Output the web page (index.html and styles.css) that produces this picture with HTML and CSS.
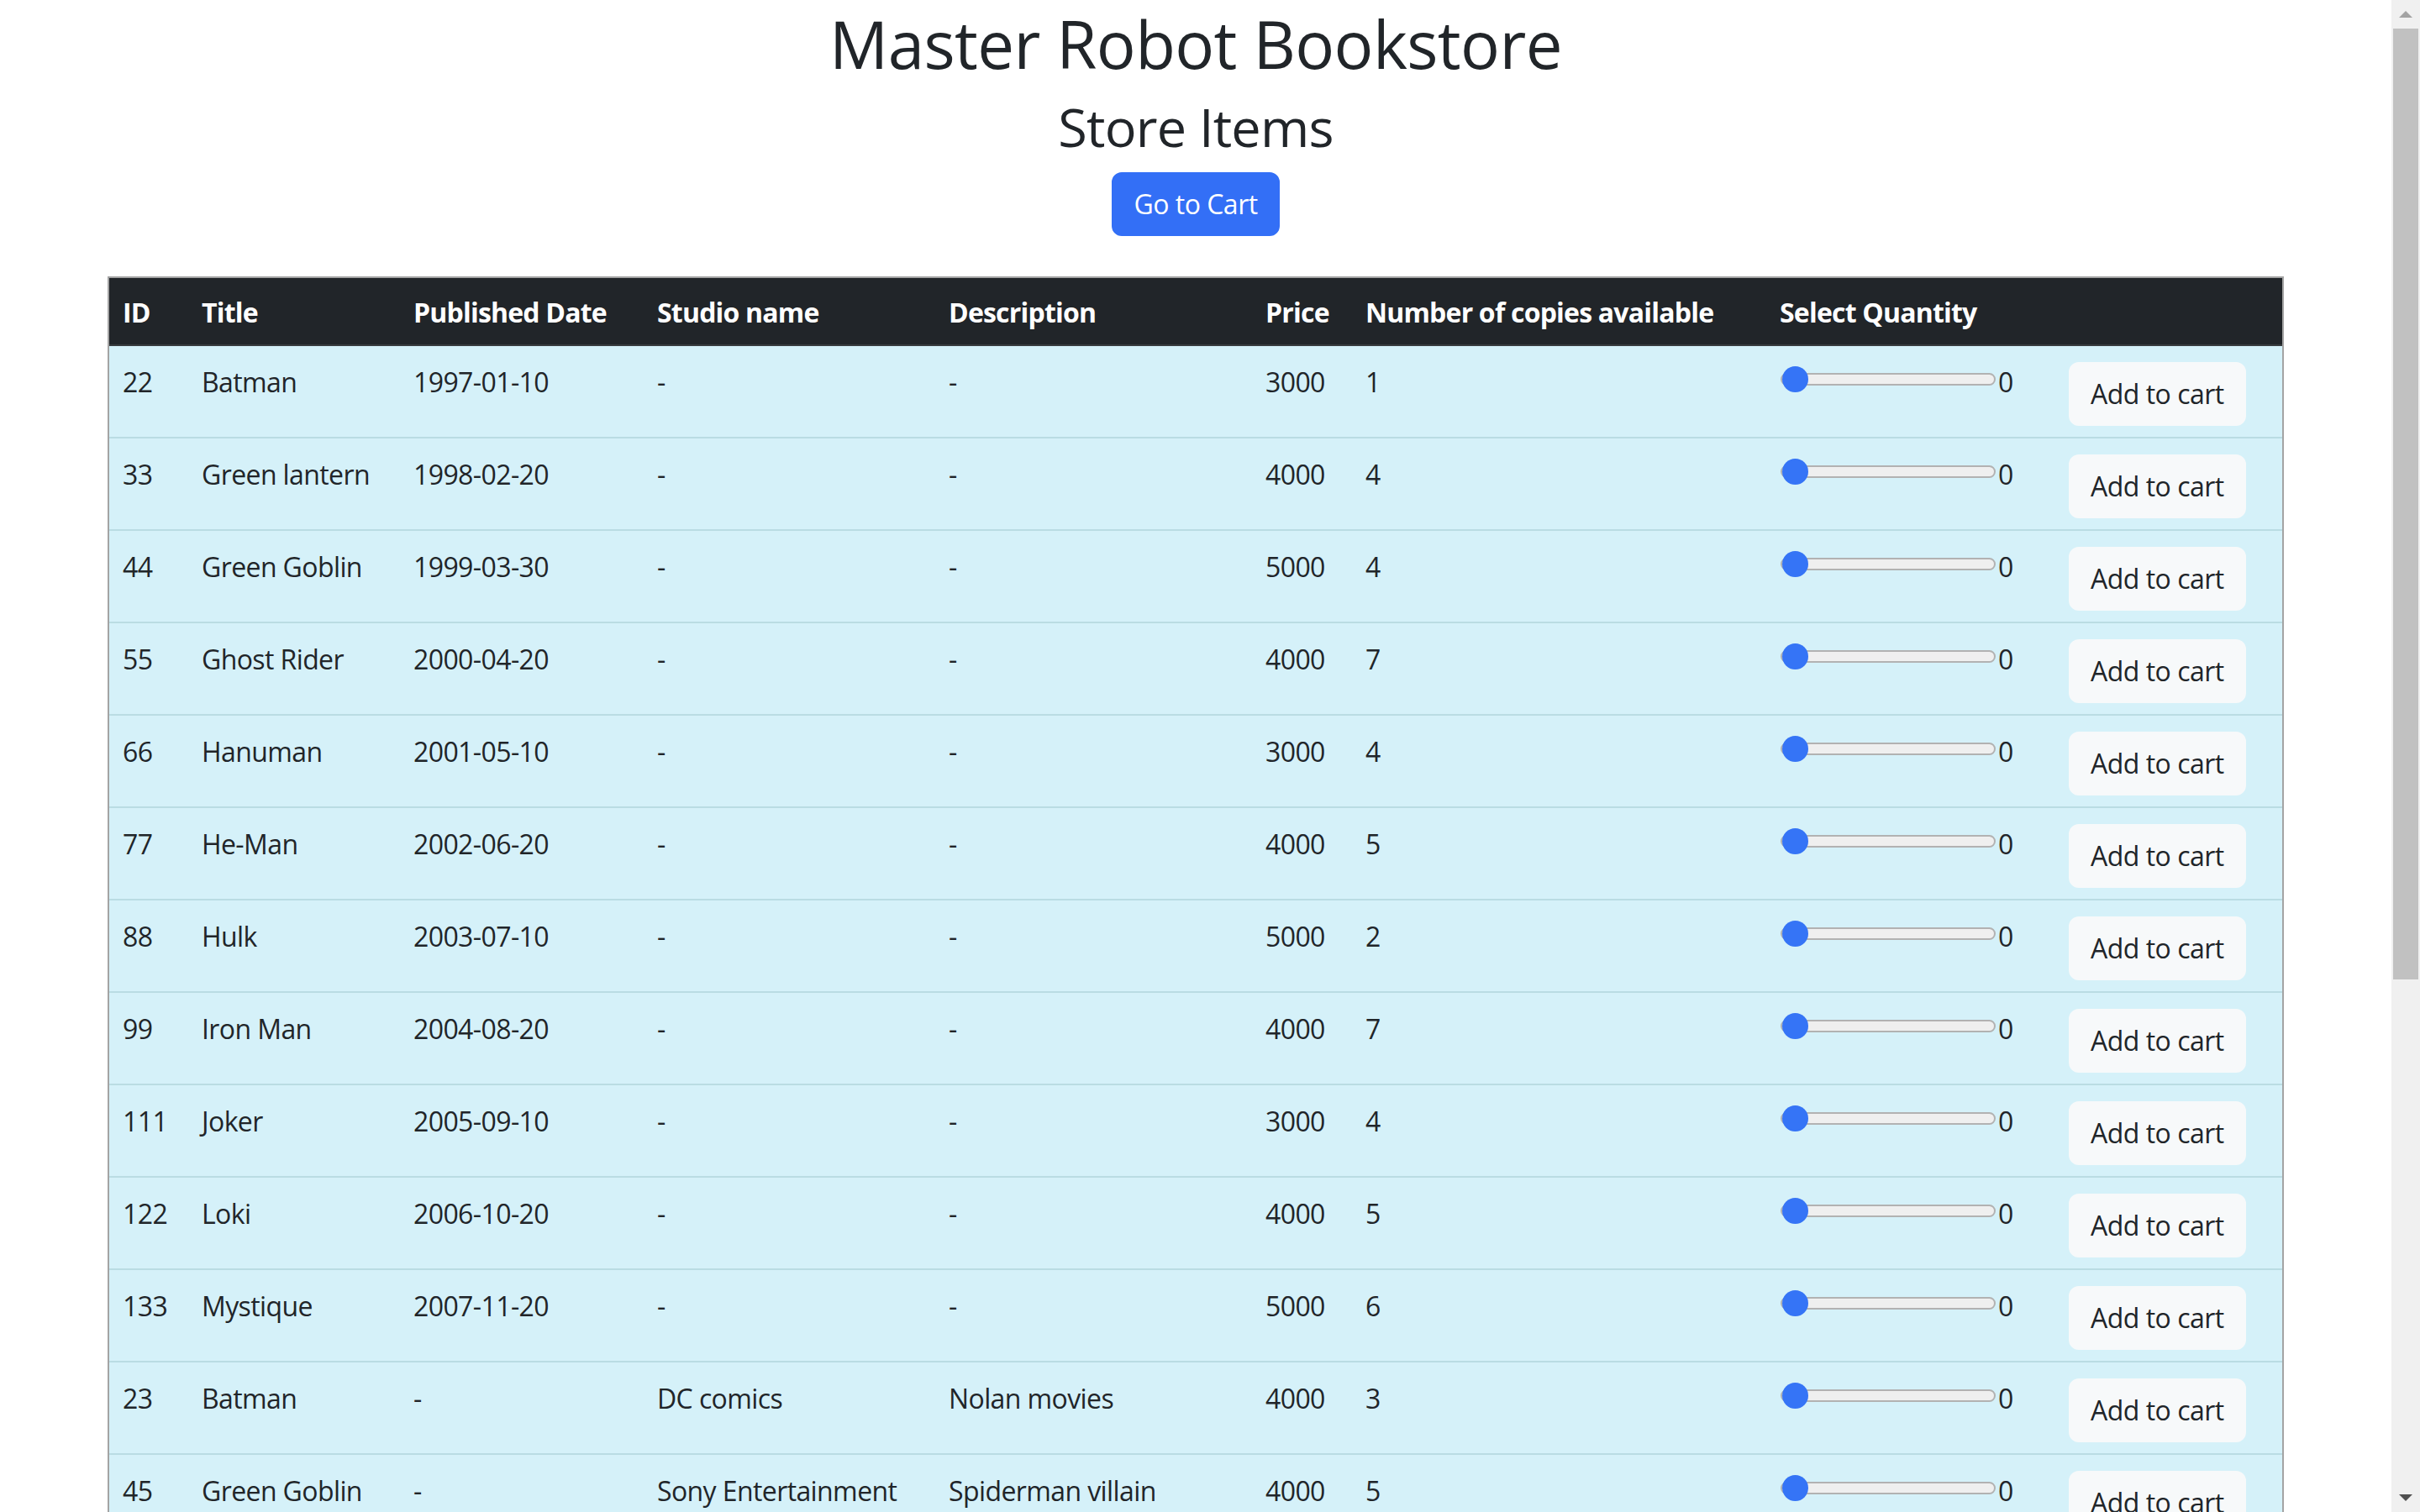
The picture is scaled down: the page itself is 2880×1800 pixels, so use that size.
FILE: index.html
```html
<!DOCTYPE html>
<html lang="en">
<head>
<meta charset="utf-8">
<title>Master Robot Bookstore</title>
<link rel="stylesheet" href="styles.css">
</head>
<body>
<div class="app">
  <header class="hero">
    <h1 class="title">Master Robot Bookstore</h1>
    <h2 class="subtitle">Store Items</h2>
    <div class="actions"><button class="btn btn-primary" type="button">Go to Cart</button></div>
  </header>
  <div class="table-wrap">
    <table class="items">
      <colgroup>
        <col class="c-id"><col class="c-title"><col class="c-date"><col class="c-studio"><col class="c-desc"><col class="c-price"><col class="c-copies"><col class="c-qty"><col class="c-act">
      </colgroup>
      <thead>
        <tr><th>ID</th><th>Title</th><th>Published Date</th><th>Studio name</th><th>Description</th><th>Price</th><th>Number of copies available</th><th>Select Quantity</th><th></th></tr>
      </thead>
      <tbody>
        <tr><td>22</td><td>Batman</td><td>1997-01-10</td><td>-</td><td>-</td><td>3000</td><td>1</td><td><div class="qty"><input type="range" min="0" max="1" value="0"><span class="qty-value">0</span></div></td><td><button class="btn btn-light" type="button">Add to cart</button></td></tr>
        <tr><td>33</td><td>Green lantern</td><td>1998-02-20</td><td>-</td><td>-</td><td>4000</td><td>4</td><td><div class="qty"><input type="range" min="0" max="4" value="0"><span class="qty-value">0</span></div></td><td><button class="btn btn-light" type="button">Add to cart</button></td></tr>
        <tr><td>44</td><td>Green Goblin</td><td>1999-03-30</td><td>-</td><td>-</td><td>5000</td><td>4</td><td><div class="qty"><input type="range" min="0" max="4" value="0"><span class="qty-value">0</span></div></td><td><button class="btn btn-light" type="button">Add to cart</button></td></tr>
        <tr><td>55</td><td>Ghost Rider</td><td>2000-04-20</td><td>-</td><td>-</td><td>4000</td><td>7</td><td><div class="qty"><input type="range" min="0" max="7" value="0"><span class="qty-value">0</span></div></td><td><button class="btn btn-light" type="button">Add to cart</button></td></tr>
        <tr><td>66</td><td>Hanuman</td><td>2001-05-10</td><td>-</td><td>-</td><td>3000</td><td>4</td><td><div class="qty"><input type="range" min="0" max="4" value="0"><span class="qty-value">0</span></div></td><td><button class="btn btn-light" type="button">Add to cart</button></td></tr>
        <tr><td>77</td><td>He-Man</td><td>2002-06-20</td><td>-</td><td>-</td><td>4000</td><td>5</td><td><div class="qty"><input type="range" min="0" max="5" value="0"><span class="qty-value">0</span></div></td><td><button class="btn btn-light" type="button">Add to cart</button></td></tr>
        <tr><td>88</td><td>Hulk</td><td>2003-07-10</td><td>-</td><td>-</td><td>5000</td><td>2</td><td><div class="qty"><input type="range" min="0" max="2" value="0"><span class="qty-value">0</span></div></td><td><button class="btn btn-light" type="button">Add to cart</button></td></tr>
        <tr><td>99</td><td>Iron Man</td><td>2004-08-20</td><td>-</td><td>-</td><td>4000</td><td>7</td><td><div class="qty"><input type="range" min="0" max="7" value="0"><span class="qty-value">0</span></div></td><td><button class="btn btn-light" type="button">Add to cart</button></td></tr>
        <tr><td>111</td><td>Joker</td><td>2005-09-10</td><td>-</td><td>-</td><td>3000</td><td>4</td><td><div class="qty"><input type="range" min="0" max="4" value="0"><span class="qty-value">0</span></div></td><td><button class="btn btn-light" type="button">Add to cart</button></td></tr>
        <tr><td>122</td><td>Loki</td><td>2006-10-20</td><td>-</td><td>-</td><td>4000</td><td>5</td><td><div class="qty"><input type="range" min="0" max="5" value="0"><span class="qty-value">0</span></div></td><td><button class="btn btn-light" type="button">Add to cart</button></td></tr>
        <tr><td>133</td><td>Mystique</td><td>2007-11-20</td><td>-</td><td>-</td><td>5000</td><td>6</td><td><div class="qty"><input type="range" min="0" max="6" value="0"><span class="qty-value">0</span></div></td><td><button class="btn btn-light" type="button">Add to cart</button></td></tr>
        <tr><td>23</td><td>Batman</td><td>-</td><td>DC comics</td><td>Nolan movies</td><td>4000</td><td>3</td><td><div class="qty"><input type="range" min="0" max="3" value="0"><span class="qty-value">0</span></div></td><td><button class="btn btn-light" type="button">Add to cart</button></td></tr>
        <tr><td>45</td><td>Green Goblin</td><td>-</td><td>Sony Entertainment</td><td>Spiderman villain</td><td>4000</td><td>5</td><td><div class="qty"><input type="range" min="0" max="5" value="0"><span class="qty-value">0</span></div></td><td><button class="btn btn-light" type="button">Add to cart</button></td></tr>
      </tbody>
    </table>
  </div>
</div>
<div class="scrollbar" aria-hidden="true">
  <div class="sb-btn"><span class="sb-up"></span></div>
  <div class="sb-thumb"></div>
  <div class="sb-fill"></div>
  <div class="sb-btn"><span class="sb-down"></span></div>
</div>
</body>
</html>
```
FILE: styles.css
```css
html {
  overflow: hidden;
}

body {
  margin: 0 34px 0 0;
  font-family: "Open Sans", "Noto Sans", "Liberation Sans", sans-serif;
  font-size: 32px;
  line-height: 1.5;
  color: #212529;
  background: #ffffff;
}

.hero {
  display: flex;
  flex-direction: column;
  align-items: center;
}

.title {
  margin: 0 0 14px;
  padding-top: 6px;
  font-size: 78px;
  font-weight: 500;
  line-height: 92px;
  letter-spacing: -0.6px;
}

.subtitle {
  margin: 0 0 16px;
  font-size: 63px;
  font-weight: 500;
  line-height: 77px;
  letter-spacing: -0.8px;
}

.actions {
  display: flex;
  justify-content: center;
  margin-bottom: 48px;
}

.btn {
  font-family: inherit;
  font-size: 32px;
  line-height: 48px;
  padding: 12px 24px;
  border: 2px solid transparent;
  border-radius: 12px;
  letter-spacing: -0.5px;
  cursor: pointer;
}

.btn-primary {
  background: #336ff6;
  border-color: #336ff6;
  color: #ffffff;
}

.btn-light {
  background: #f7f9fa;
  border-color: #f7f9fa;
  color: #212529;
}

.table-wrap {
  padding: 0 128px;
}

.items {
  width: 100%;
  table-layout: fixed;
  border-collapse: separate;
  border-spacing: 0;
  border: 2px solid #a4a4a4;
}

.c-id { width: 94px; }
.c-title { width: 252px; }
.c-date { width: 290px; }
.c-studio { width: 347px; }
.c-desc { width: 377px; }
.c-price { width: 119px; }
.c-copies { width: 493px; }
.c-qty { width: 344px; }

.items th {
  background: #212529;
  color: #ffffff;
  font-weight: 700;
  text-align: left;
  padding: 17px 16px 14px;
  border-bottom: 2px solid #373b3e;
  white-space: nowrap;
  letter-spacing: -0.8px;
}

.items td {
  background: #d5f1f9;
  padding: 19px 16px 13px;
  vertical-align: top;
  border-bottom: 2px solid #badce3;
  white-space: nowrap;
  letter-spacing: -0.6px;
}

.qty {
  display: flex;
  align-items: flex-start;
}

.qty input[type="range"] {
  -webkit-appearance: none;
  appearance: none;
  width: 256px;
  height: 31px;
  margin: 5px 0 0 1px;
  padding: 0;
  background: transparent;
}

.qty input[type="range"]::-webkit-slider-runnable-track {
  box-sizing: border-box;
  height: 15px;
  background: #efefef;
  border: 2px solid #b2b2b2;
  border-radius: 8px;
}

.qty input[type="range"]::-webkit-slider-thumb {
  -webkit-appearance: none;
  appearance: none;
  width: 31px;
  height: 31px;
  margin-top: -10px;
  border: none;
  border-radius: 50%;
  background: #3574f6;
}

.qty-value {
  line-height: 48px;
  margin-left: 3px;
}

.scrollbar {
  position: fixed;
  top: 0;
  right: 0;
  width: 34px;
  height: 100vh;
  background: #f0f0f0;
  display: flex;
  flex-direction: column;
}

.sb-btn {
  height: 34px;
  flex: none;
  display: flex;
  align-items: center;
  justify-content: center;
}

.sb-up {
  width: 0;
  height: 0;
  border-left: 8px solid transparent;
  border-right: 8px solid transparent;
  border-bottom: 8px solid #a3a3a3;
}

.sb-down {
  width: 0;
  height: 0;
  border-left: 8px solid transparent;
  border-right: 8px solid transparent;
  border-top: 8px solid #505050;
}

.sb-thumb {
  flex: none;
  height: 1132px;
  margin: 0 2px;
  background: #c1c1c1;
}

.sb-fill {
  flex: 1;
}
```
